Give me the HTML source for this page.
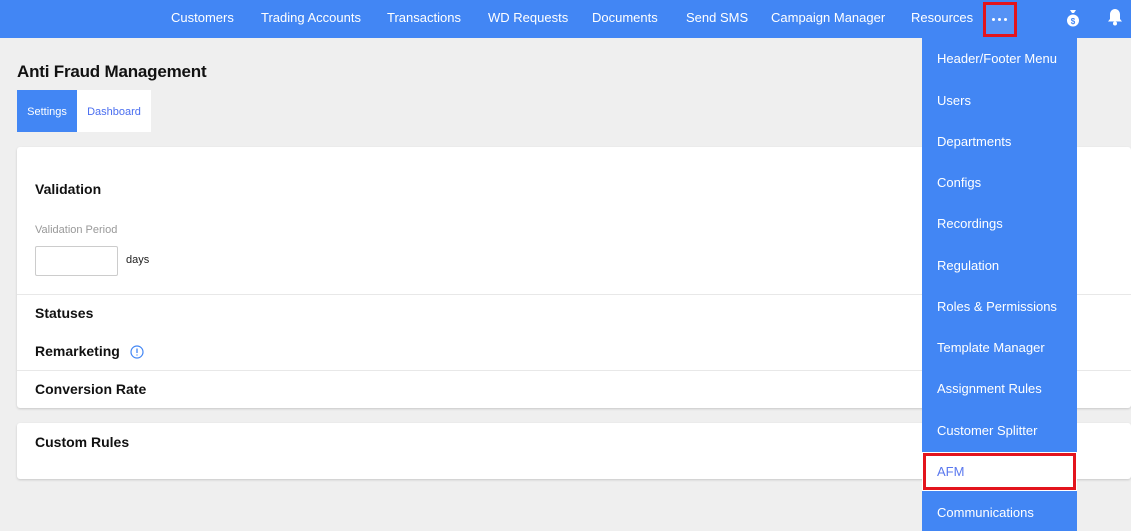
<!DOCTYPE html>
<html><head><style>
*{margin:0;padding:0;box-sizing:border-box}
body{width:1131px;height:531px;overflow:hidden;background:#efefef;font-family:"Liberation Sans",sans-serif;position:relative}
.hdr{position:absolute;left:0;top:0;width:1131px;height:38px;background:#4286f4}
.nav{position:absolute;top:10px;color:#fff;font-size:13px}
.dots{position:absolute;left:983px;top:2px;width:34px;height:35px;border:3px solid #e3141d;background:#5592f5}
.dots i{position:absolute;top:13px;width:3px;height:3px;background:#fff;border-radius:50%}
h1{position:absolute;left:17px;top:62px;font-size:17px;font-weight:bold;color:#111;letter-spacing:-0.2px}
.tab{position:absolute;top:90px;height:42px;line-height:44px;font-size:11px;text-align:center}
.card{position:absolute;left:17px;right:0;background:#fff;box-shadow:0 1px 2px #c8c8c8;border-radius:3px}
.b{position:absolute;left:35px;font-size:14px;font-weight:bold;color:#111}
.line{position:absolute;left:17px;right:0;height:1px;background:#e8e8e8}
.menu{position:absolute;left:922px;top:38px;width:155px;height:493px;background:#4286f4}
.mi{position:absolute;left:15px;color:#fff;font-size:13px}
</style></head><body>
<div class="hdr">
<span class="nav" style="left:171px">Customers</span>
<span class="nav" style="left:261px">Trading Accounts</span>
<span class="nav" style="left:387px">Transactions</span>
<span class="nav" style="left:488px">WD Requests</span>
<span class="nav" style="left:592px">Documents</span>
<span class="nav" style="left:686px">Send SMS</span>
<span class="nav" style="left:771px">Campaign Manager</span>
<span class="nav" style="left:911px">Resources</span>
<div class="dots"><i style="left:6px"></i><i style="left:12px"></i><i style="left:18px"></i></div>
<svg style="position:absolute;left:1066px;top:9px" width="14" height="18" viewBox="0 0 14 18"><path d="M4 1h6l-2 3h-2z" fill="#fff"/><ellipse cx="7" cy="11.5" rx="6" ry="6" fill="#fff"/><text x="7" y="15" font-size="8" text-anchor="middle" fill="#4286f4" font-family="Liberation Sans" font-weight="bold">$</text></svg>
<svg style="position:absolute;left:1107px;top:8px" width="16" height="18" viewBox="0 0 16 18"><path d="M8 1c-3 0-5 2.5-5 5.5v4.5l-2 2.5h14l-2-2.5v-4.5c0-3-2-5.5-5-5.5z" fill="#fff"/><circle cx="8" cy="15.5" r="2" fill="#fff"/></svg>
</div>
<h1>Anti Fraud Management</h1>
<div class="tab" style="left:17px;width:60px;background:#4286f4;color:#fff">Settings</div>
<div class="tab" style="left:77px;width:74px;background:#fff;color:#4a6ef0">Dashboard</div>
<div class="card" style="top:147px;height:261px"></div>
<div class="b" style="top:181px">Validation</div>
<div style="position:absolute;left:35px;top:224px;font-size:11px;color:#999">Validation Period</div>
<div style="position:absolute;left:35px;top:246px;width:83px;height:30px;border:1px solid #ccc;border-radius:2px;background:#fff"></div>
<div style="position:absolute;left:126px;top:254px;font-size:11px;color:#222">days</div>
<div class="line" style="top:294px"></div>
<div class="b" style="top:305px">Statuses</div>
<div class="b" style="top:343px">Remarketing</div>
<svg style="position:absolute;left:130px;top:345px" width="14" height="14"><circle cx="7" cy="7" r="6" fill="none" stroke="#4286f4" stroke-width="1.2"/><path d="M7 3.5v4.5M7 9.5v1" stroke="#4286f4" stroke-width="1.3"/></svg>
<div class="line" style="top:370px"></div>
<div class="b" style="top:381px">Conversion Rate</div>
<div class="card" style="top:423px;height:56px"></div>
<div class="b" style="top:434px">Custom Rules</div>
<div class="menu">
<span class="mi" style="top:13px">Header/Footer Menu</span>
<span class="mi" style="top:55px">Users</span>
<span class="mi" style="top:96px">Departments</span>
<span class="mi" style="top:137px">Configs</span>
<span class="mi" style="top:178px">Recordings</span>
<span class="mi" style="top:220px">Regulation</span>
<span class="mi" style="top:261px">Roles &amp; Permissions</span>
<span class="mi" style="top:302px">Template Manager</span>
<span class="mi" style="top:343px">Assignment Rules</span>
<span class="mi" style="top:385px">Customer Splitter</span>
<div style="position:absolute;left:1px;top:415px;width:153px;height:37px;background:#fff;border:3px solid #e3141d;outline:1px solid #fff"></div>
<span class="mi" style="top:426px;color:#5a78ee">AFM</span>
<span class="mi" style="top:467px">Communications</span>
</div>
</body></html>
